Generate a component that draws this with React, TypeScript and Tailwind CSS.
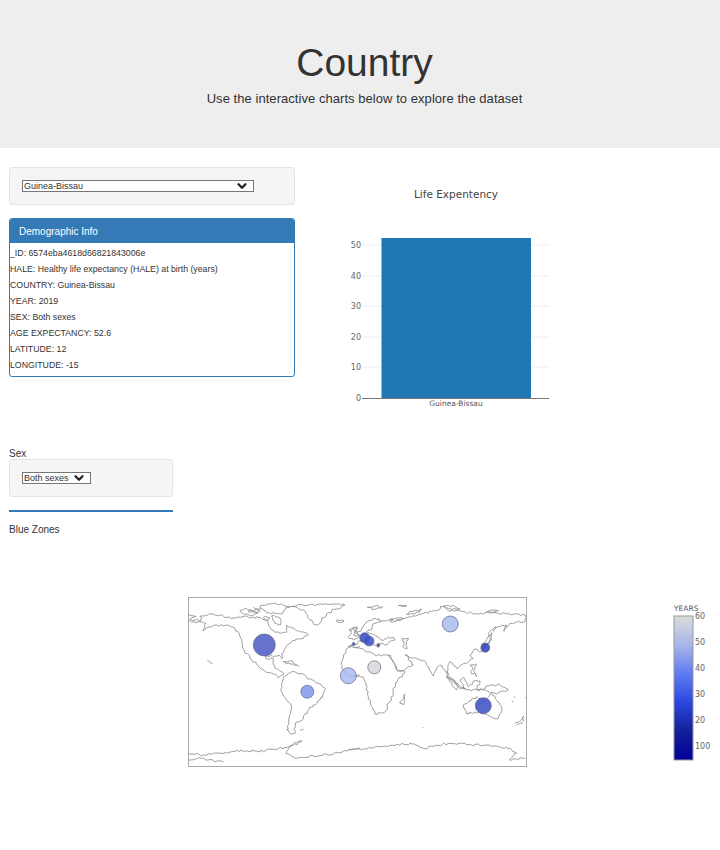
import { ChevronDown } from 'lucide-react'

const DEMOGRAPHICS = [
  ['_ID', '6574eba4618d66821843006e'],
  ['HALE', 'Healthy life expectancy (HALE) at birth (years)'],
  ['COUNTRY', 'Guinea-Bissau'],
  ['YEAR', '2019'],
  ['SEX', 'Both sexes'],
  ['AGE EXPECTANCY', '52.6'],
  ['LATITUDE', '12'],
  ['LONGITUDE', '-15'],
]

const TICKS = [
  { label: '50', y: 245 },
  { label: '40', y: 276 },
  { label: '30', y: 306 },
  { label: '20', y: 337 },
  { label: '10', y: 367 },
  { label: '0', y: 398 },
]

const BUBBLES = [
  { x: 264.3, y: 645, r: 11, fill: '#4a5bc4' },
  { x: 307.3, y: 691.7, r: 6.5, fill: '#7f96f0' },
  { x: 348.3, y: 675.7, r: 8, fill: '#a9bbee' },
  { x: 353.7, y: 644, r: 1.5, fill: '#3a4cc0' },
  { x: 450.3, y: 624, r: 8, fill: '#a9bbee' },
  { x: 364.7, y: 637.7, r: 5, fill: '#2f45c8' },
  { x: 369, y: 641, r: 5, fill: '#3a52d0' },
  { x: 378.3, y: 645, r: 1.5, fill: '#2a3cb0' },
  { x: 374.3, y: 667.3, r: 6.5, fill: '#d8d8d8' },
  { x: 485.3, y: 647.7, r: 4.5, fill: '#2a3cb8' },
  { x: 483.3, y: 705.7, r: 8, fill: '#3a4cc4' },
]

const COLOR_TICKS = [
  { label: '60', y: 619 },
  { label: '50', y: 645 },
  { label: '40', y: 671 },
  { label: '30', y: 697 },
  { label: '20', y: 723 },
  { label: '100', y: 749 },
]

// coastlines, traced by hand at 3x from the left half of the map
const WEST_COAST = [
  'M60 78L100 72L130 78L155 86L195 78L212 84L240 82L264 92L266 108L276 120L300 130L322 124L318 106L332 112L345 118L362 126L385 135L362 146L345 152L330 160L320 166L312 182L304 192L306 206L298 196L285 198L270 198L256 196L262 208L280 206L284 226L296 240L312 252L295 264L276 250L258 246L235 228L214 208L196 190L188 165L180 140L165 115L140 105L105 106L68 122L78 100L60 95L66 84Z',
  'M310 262L325 250L340 245L365 250L380 262L395 270L415 280L436 295L428 315L420 330L400 345L386 360L375 372L370 385L355 395L346 405L342 418L345 430L328 428L320 420L326 390L332 370L335 350L320 330L305 305L304 285Z',
  'M332 50L360 44L400 44L450 42L495 45L465 58L440 72L425 90L412 106L398 96L385 85L378 70L370 60Z',
  'M180 62L195 55L205 60L235 68L222 74L210 76L190 72ZM240 48L265 42L290 42L330 48L315 60L300 72L280 68L262 70L250 60ZM275 78L290 80L300 84L302 104L285 100L278 90ZM250 82L270 84L262 92ZM205 66L232 58L240 64ZM220 52L240 56',
  'M310 215L332 212L350 224L330 222ZM350 226L358 230M470 90L492 92L490 96L472 96ZM82 212L98 222',
  'M25 72L48 80L30 88L50 88L60 96L35 96L25 92',
  'M25 490L70 495L100 490L130 490L165 484L200 482L230 484L260 480L295 476L330 470L350 458L366 454L340 465L325 478L318 490L335 500L350 505L390 498L430 495L480 488L510 480L540 474',
  'M25 510L50 506L70 505L100 512L130 515',
  'M540 170L520 172L510 170L498 182L490 195L485 215L485 235L498 250L510 260L540 255',
  'M508 120L520 112L530 116L526 128L538 135L528 146L520 150L505 140L514 130Z',
  'M360 420L370 418',
]

const EAST_COAST = [
  'M-5 255L20 260L40 262L48 285L55 320L65 350L75 372L90 370L105 365L118 335L130 310L135 280L150 262L165 245L140 240L128 215L115 195L95 198L75 195L50 185L30 175L10 168L-5 170',
  'M-5 170L10 160L20 165L28 152L35 150L50 162L58 156L70 165L85 172L92 160L110 165L118 155L135 150L125 142L110 146L95 150L78 138L60 130L50 125L60 120L75 100L95 92L75 85L50 95L40 110L32 125L20 128',
  'M95 92L115 90L130 90L120 95L165 85L215 72L245 65L280 50L320 62L380 72L425 68L470 72L525 75L525 95L500 96L480 100L462 124L470 105L445 110L430 115L415 130L425 150L410 165L395 185L372 178L360 195L370 205L360 210L345 220L320 235L308 222L300 215L294 240L290 262L305 280L320 300L326 292L312 270L300 262L285 240L270 225L258 240L250 258L238 240L225 215L205 208L190 205L165 195L175 210L190 225L165 238L145 245L130 215L115 195',
  'M156 145L175 145L168 155L172 175L158 170L162 155Z',
  'M5 115L22 110L16 122L28 135L10 135L14 125ZM-2 118L6 122',
  'M340 345L355 335L380 320L395 330L400 335L412 325L425 310L440 330L455 350L452 370L445 385L425 382L400 370L375 366L350 372L345 360Z',
  'M150 340L165 312L160 345Z',
  'M495 400L510 392L522 378L518 395L500 406',
  'M395 165L410 148L425 128L420 148L415 158L402 166ZM430 125L440 112',
  'M52 52L75 48L98 50L75 58ZM145 47L170 48ZM280 48L305 48L330 55L295 62ZM170 72L192 62L215 58L190 72ZM410 65L445 62L420 70ZM120 90L140 84L160 86L135 94',
  'M290 260L310 272L330 295L345 298L330 270L342 262L355 290L375 272L390 272L380 300L402 296L420 285L450 285L475 300L440 312L400 300L350 300Z',
  'M360 225L378 222L372 240L380 260L362 245L368 235Z',
  'M492 320L496 322M525 325L528 322M485 332L490 336M217 413L220 413',
  'M-5 478L40 476L90 470L135 466L180 460L200 466L220 476L260 466L300 460L350 464L400 466L445 470L480 474L500 490L478 510L526 505',
]

// breaks a traced line into short wobbly steps so it reads as a coast
function roughen(d: string) {
  let seed = 4711
  const jitter = () => {
    seed = (seed * 16807) % 2147483647
    return (seed / 2147483647 - 0.5) * 7
  }
  return d
    .split('M')
    .filter(Boolean)
    .map((sub) => {
      const pts = sub
        .replace('Z', '')
        .split('L')
        .map((p) => p.split(' ').map(Number))
      if (sub.endsWith('Z')) pts.push(pts[0])
      const out: string[] = []
      for (let i = 0; i < pts.length - 1; i++) {
        const [x1, y1] = pts[i]
        const [x2, y2] = pts[i + 1]
        const steps = Math.max(1, Math.ceil(Math.hypot(x2 - x1, y2 - y1) / 7))
        for (let j = 0; j < steps; j++) {
          const t = j / steps
          const wob = j === 0 ? [0, 0] : [jitter(), jitter()]
          out.push(`${(x1 + (x2 - x1) * t + wob[0]).toFixed(1)} ${(y1 + (y2 - y1) * t + wob[1]).toFixed(1)}`)
        }
      }
      const last = pts[pts.length - 1]
      out.push(`${last[0]} ${last[1]}`)
      return `M${out.join('L')}`
    })
    .join('')
}

function LifeChart() {
  return (
    <svg viewBox="340 180 230 235" className="mt-[13px] ml-[45px] h-[235px] w-[230px] shrink-0">
      <text x="456" y="198" textAnchor="middle" className="fill-[#444] font-['DejaVu_Sans',sans-serif] text-[10.5px]">
        Life Expentency
      </text>
      {TICKS.map((tick) => (
        <g key={tick.label}>
          {tick.label !== '0' && <line x1="362" x2="549" y1={tick.y} y2={tick.y} stroke="#eeeeee" />}
          <text x="361" y={tick.y + 3} textAnchor="end" className="fill-[#666] font-['DejaVu_Sans',sans-serif] text-[8px]">
            {tick.label}
          </text>
        </g>
      ))}
      <rect x="381.5" y="238" width="149.5" height="160" fill="#1f77b4" />
      <line x1="362" x2="549" y1="398.5" y2="398.5" stroke="#777777" />
      <text x="456" y="406" textAnchor="middle" className="fill-[#555] font-['DejaVu_Sans',sans-serif] text-[7.5px]">
        Guinea-Bissau
      </text>
    </svg>
  )
}

function WorldMap() {
  return (
    <svg viewBox="188 597 339 170" className="h-[170px] w-[339px] shrink-0">
      <rect x="188.5" y="597.5" width="338" height="169" fill="#ffffff" stroke="#aaaaaa" />
      <g transform="translate(180 590) scale(0.3333)">
        {WEST_COAST.map((d) => (
          <path key={d} d={roughen(d)} fill="none" stroke="#888888" strokeWidth="2.4" strokeLinejoin="round" />
        ))}
      </g>
      <g transform="translate(350 590) scale(0.3333)">
        {EAST_COAST.map((d) => (
          <path key={d} d={roughen(d)} fill="none" stroke="#888888" strokeWidth="2.4" strokeLinejoin="round" />
        ))}
      </g>
      {BUBBLES.map((b) => (
        <circle key={`${b.x}-${b.y}`} cx={b.x} cy={b.y} r={b.r} fill={b.fill} fillOpacity="0.85" stroke="#666688" strokeWidth="0.7" />
      ))}
    </svg>
  )
}

function ColorBar() {
  return (
    <svg viewBox="670 600 50 165" className="mt-[3px] ml-[143px] h-[165px] w-[50px] shrink-0">
      <defs>
        <linearGradient id="years" x1="0" x2="0" y1="0" y2="1">
          <stop offset="0%" stopColor="#dcdcdc" />
          <stop offset="20%" stopColor="#a9b6e8" />
          <stop offset="40%" stopColor="#5f7cf2" />
          <stop offset="60%" stopColor="#2b47e0" />
          <stop offset="80%" stopColor="#14209a" />
          <stop offset="100%" stopColor="#00009a" />
        </linearGradient>
      </defs>
      <text x="674" y="611" className="fill-[#555] font-['DejaVu_Sans',sans-serif] text-[7.5px]">
        YEARS
      </text>
      <rect x="674" y="616" width="19" height="144" fill="url(#years)" stroke="#999999" />
      {COLOR_TICKS.map((tick) => (
        <text key={tick.label} x="695" y={tick.y} className="fill-[#666] font-['DejaVu_Sans',sans-serif] text-[8px]">
          {tick.label}
        </text>
      ))}
    </svg>
  )
}

function Dropdown({ options, width }: { options: string[]; width: string }) {
  return (
    <div className={`relative h-[12px] ${width}`}>
      <select className="block h-[12px] w-full appearance-none border border-[#767676] bg-white pl-[1px] text-[9px] leading-[10px]">
        {options.map((option) => (
          <option key={option}>{option}</option>
        ))}
      </select>
      <ChevronDown className="absolute top-[-1px] right-[5px] h-[14px] w-[14px] text-[#222]" strokeWidth={4} />
    </div>
  )
}

export default function App() {
  return (
    <div className="h-[850px] overflow-hidden bg-white font-['Liberation_Sans',Arial,sans-serif] text-[#333]">
      {/* Header */}
      <div className="flex h-[148px] flex-col items-center bg-[#eeeeee] pt-[39px] pl-[9px]">
        <h1 className="text-[39px] leading-[47px] font-normal">Country</h1>
        <p className="mt-[5px] text-[13px] leading-[16px] tracking-[0.05px]">
          Use the interactive charts below to explore the dataset
        </p>
      </div>

      {/* Country + chart */}
      <div className="flex items-start pt-[19px] pl-[9px]">
        <div className="w-[286px] shrink-0">
          <div className="flex h-[38px] items-center rounded-[3px] border border-[#e3e3e3] bg-[#f5f5f5] pl-[12px]">
            <Dropdown options={['Guinea-Bissau', 'Guinea', 'Guyana']} width="w-[232px]" />
          </div>
          <div className="mt-[13px] h-[159px] overflow-hidden rounded-[3px] border border-[#337ab7]">
            <div className="flex h-[24px] items-center bg-[#337ab7] pl-[9px] text-[10px] text-white">
              Demographic Info
            </div>
            <div className="pt-[2px] text-[8.75px] leading-[16px]">
              {DEMOGRAPHICS.map(([key, value]) => (
                <div key={key}>
                  {key}: {value}
                </div>
              ))}
            </div>
          </div>
        </div>
        <LifeChart />
      </div>

      {/* Sex filter */}
      <div className="mt-[33px] ml-[9px] w-[164px] text-[10px]">
        <div className="leading-[11px]">Sex</div>
        <div className="flex h-[38px] items-center rounded-[3px] border border-[#e3e3e3] bg-[#f5f5f5] pl-[12px]">
          <Dropdown options={['Both sexes', 'Male', 'Female']} width="w-[69px]" />
        </div>
        <div className="mt-[13px] h-[2px] bg-[#337ab7]" />
        <div className="mt-[12px] leading-[11px]">Blue Zones</div>
      </div>

      {/* Map */}
      <div className="mt-[62px] flex items-start pl-[188px]">
        <WorldMap />
        <ColorBar />
      </div>
    </div>
  )
}
